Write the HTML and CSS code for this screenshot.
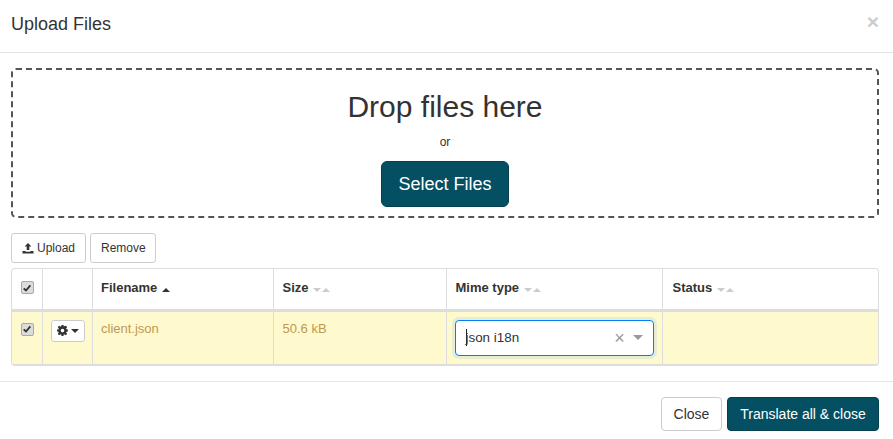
FILE: index.html
```html
<!DOCTYPE html>
<html lang="en">
<head>
<meta charset="utf-8">
<title>Upload Files</title>
<link rel="stylesheet" href="styles.css">
</head>
<body>
<div class="modal">
  <header class="modal-header">
    <h4 class="modal-title">Upload Files</h4>
    <span class="close-x">×</span>
  </header>
  <main class="modal-body">
    <section class="dropzone">
      <div class="drop-title">Drop files here</div>
      <div class="drop-or">or</div>
      <button class="btn-select">Select Files</button>
    </section>
    <div class="toolbar">
      <button class="btn"><svg class="ico-upload" viewBox="0 0 12 12" width="12" height="12"><path fill="#333" d="M6 1 9.4 4.6H7.3V8H4.7V4.6H2.6zM0.5 9H3.6V9.7H8.4V9H11.5V11.5H0.5z"/></svg> Upload</button>
      <button class="btn btn-remove">Remove</button>
    </div>
    <div class="table-wrap">
      <table class="files">
        <colgroup>
          <col class="c-check"><col class="c-act"><col class="c-name"><col class="c-size"><col class="c-mime"><col class="c-status">
        </colgroup>
        <thead>
          <tr>
            <th class="center"><span class="check"><svg viewBox="0 0 12 12" width="10" height="10"><path fill="none" stroke="#333" stroke-width="2.2" d="M2 6.4 4.8 9 10 2.8"/></svg></span></th>
            <th></th>
            <th class="pad-name">Filename <span class="sort"><i class="up on"></i></span></th>
            <th class="pad-size">Size <span class="sort"><i class="down"></i><i class="up"></i></span></th>
            <th class="pad-mime">Mime type <span class="sort"><i class="down"></i><i class="up"></i></span></th>
            <th class="pad-status">Status <span class="sort"><i class="down"></i><i class="up"></i></span></th>
          </tr>
        </thead>
        <tbody>
          <tr>
            <td class="center"><span class="check"><svg viewBox="0 0 12 12" width="10" height="10"><path fill="none" stroke="#333" stroke-width="2.2" d="M2 6.4 4.8 9 10 2.8"/></svg></span></td>
            <td class="act"><button class="btn-gear"><svg viewBox="0 0 12 12" width="11" height="11"><path fill="#333" fill-rule="evenodd" d="M4.9 0h2.2l.3 1.6 1-.4 1.2-.5 1.5 1.5-.9 1.3-.3.9 1.9.5v2.2l-1.9.4.3.9.9 1.3-1.5 1.6-1.3-.9-.9-.4-.3 1.9H4.9l-.4-1.9-.9.4-1.3.9L.8 9.8l.9-1.3.3-.9L.1 7.2V5l1.9-.5-.3-.9L.8 2.3 2.3.8l1.3.9.9-.1zM6 4.1a2 2 0 1 0 0 4 2 2 0 0 0 0-4z"/></svg><i class="caret"></i></button></td>
            <td class="pad-name">client.json</td>
            <td class="pad-size">50.6 kB</td>
            <td class="mime-cell">
              <div class="select-box">
                <span class="caret-bar"></span><span class="select-value">json i18n</span>
                <span class="select-clear">×</span>
                <i class="select-arrow"></i>
              </div>
            </td>
            <td></td>
          </tr>
        </tbody>
      </table>
    </div>
  </main>
  <footer class="modal-footer">
    <button class="btn-close">Close</button>
    <button class="btn-primary">Translate all &amp; close</button>
  </footer>
</div>
</body>
</html>
```
FILE: styles.css
```css
* { box-sizing: border-box; }
html, body { margin: 0; padding: 0; }
body {
  width: 893px;
  height: 439px;
  overflow: hidden;
  background: #fff;
  color: #333;
  font-family: "Liberation Sans", Arial, sans-serif;
  font-size: 14px;
  line-height: 20px;
}
button { font-family: inherit; cursor: pointer; }
.modal-header {
  height: 53px;
  padding: 0 15px 0 11px;
  border-bottom: 1px solid #e5e5e5;
  display: flex;
  justify-content: space-between;
  align-items: center;
}
.modal-title { margin: 0; font-size: 18px; font-weight: 400; line-height: 20px; position: relative; top: -2px; }
.close-x { font-size: 21px; font-weight: 700; color: #ccc; line-height: 1; position: relative; top: -5px; right: -1px; }
.modal-body { padding: 15px 14px 0 11px; }
.dropzone {
  height: 150px;
  border: 2px dashed #555;
  border-radius: 5px;
  display: flex;
  flex-direction: column;
  align-items: center;
  padding-top: 17px;
}
.drop-title { font-size: 30px; line-height: 40px; }
.drop-or { font-size: 12px; line-height: 18px; margin-top: 6px; }
.btn-select {
  margin-top: 10px;
  width: 128px;
  height: 46px;
  background: #054f63;
  color: #fff;
  border: 1px solid #03404f;
  border-radius: 6px;
  font-size: 18px;
  padding: 0;
}
.toolbar { display: flex; gap: 4px; margin-top: 15px; height: 30px; }
.btn {
  height: 30px;
  padding: 0 10px;
  background: #fff;
  border: 1px solid #ccc;
  border-radius: 3px;
  color: #333;
  font-size: 12px;
  display: flex;
  align-items: center;
  gap: 3px;
}
.btn-remove { width: 66px; }
.table-wrap {
  margin-top: 5px;
  width: 868px;
  height: 98px;
  border: 1px solid #ddd;
  border-bottom-width: 2px;
  border-radius: 4px;
  overflow: hidden;
}
.files { width: 866px; border-collapse: collapse; table-layout: fixed; }
.c-check { width: 30px; }
.c-act { width: 50px; }
.c-name { width: 181px; }
.c-size { width: 173px; }
.c-mime { width: 216px; }
.files th, .files td {
  border-left: 1px solid #ddd;
  padding: 8px;
  vertical-align: top;
  text-align: left;
  font-size: 13px;
  line-height: 18px;
}
.files th:first-child, .files td:first-child { border-left: 0; }
.files th {
  height: 41px;
  padding-top: 10px;
  font-weight: 700;
  border-bottom: 3px solid #ddd;
}
.files td { height: 54px; background: #fffacd; color: #c09853; padding-top: 8px; }
.files .pad-name { padding-left: 8.5px; }
.files .pad-size { padding-left: 9px; }
.files .pad-mime { padding-left: 9px; }
.files .pad-status { padding-left: 10px; }
.files .center { padding: 12px 0 0 1px; text-align: center; }
.files td.center { padding-top: 11px; }
.check {
  display: inline-block;
  width: 13px;
  height: 13px;
  border: 1px solid #a8a8a8;
  border-radius: 2px;
  background: #dcdcdc;
  line-height: 0;
  vertical-align: top;
  padding: 0.5px;
}
.sort { display: inline-flex; align-items: center; gap: 0; margin-left: 1px; vertical-align: 0; }
.sort i { display: block; width: 0; height: 0; border-left: 4px solid transparent; border-right: 4px solid transparent; margin-right: 1px; }
.sort .up { border-bottom: 4px solid #ccc; margin-top: 0; }
.sort .down { border-top: 4px solid #ccc; }
.sort .on { border-bottom-color: #333; }
.files td.act { padding: 8px 8px 0; }
.btn-gear {
  width: 34px;
  height: 22px;
  padding: 0;
  background: #fff;
  border: 1px solid #ccc;
  border-radius: 3px;
  display: flex;
  align-items: center;
  justify-content: center;
  gap: 3px;
}
.caret { display: block; width: 0; height: 0; border-left: 4px solid transparent; border-right: 4px solid transparent; border-top: 4px solid #333; }
.files td.mime-cell { padding: 8px; }
.select-box {
  width: 199px;
  height: 36px;
  background: #fff;
  border: 1px solid #007eff;
  border-radius: 4px;
  box-shadow: 0 0 0 3px rgba(0, 126, 255, 0.1);
  display: flex;
  align-items: center;
  padding-left: 10px;
  color: #333;
}
.caret-bar { width: 1px; height: 17px; background: #222; margin-right: -1px; }
.select-value { flex: 1; font-size: 13.4px; }
.select-clear { color: #999; font-size: 18px; width: 12px; text-align: center; line-height: 1; margin-right: -1px; }
.select-arrow { display: block; width: 0; height: 0; margin: 0 10px 0 8px; border-left: 5px solid transparent; border-right: 5px solid transparent; border-top: 5px solid #999; }
.modal-footer {
  margin-top: 15px;
  height: 58px;
  border-top: 1px solid #e5e5e5;
  display: flex;
  justify-content: flex-end;
  align-items: flex-start;
  gap: 5px;
  padding: 15px 14px 0 0;
}
.btn-close {
  width: 61px;
  height: 34px;
  background: #fff;
  border: 1px solid #ccc;
  border-radius: 4px;
  color: #333;
  font-size: 14px;
  padding: 0;
}
.btn-primary {
  width: 152px;
  height: 34px;
  background: #054f63;
  border: 1px solid #03404f;
  border-radius: 4px;
  color: #fff;
  font-size: 14px;
  padding: 0;
}
```
